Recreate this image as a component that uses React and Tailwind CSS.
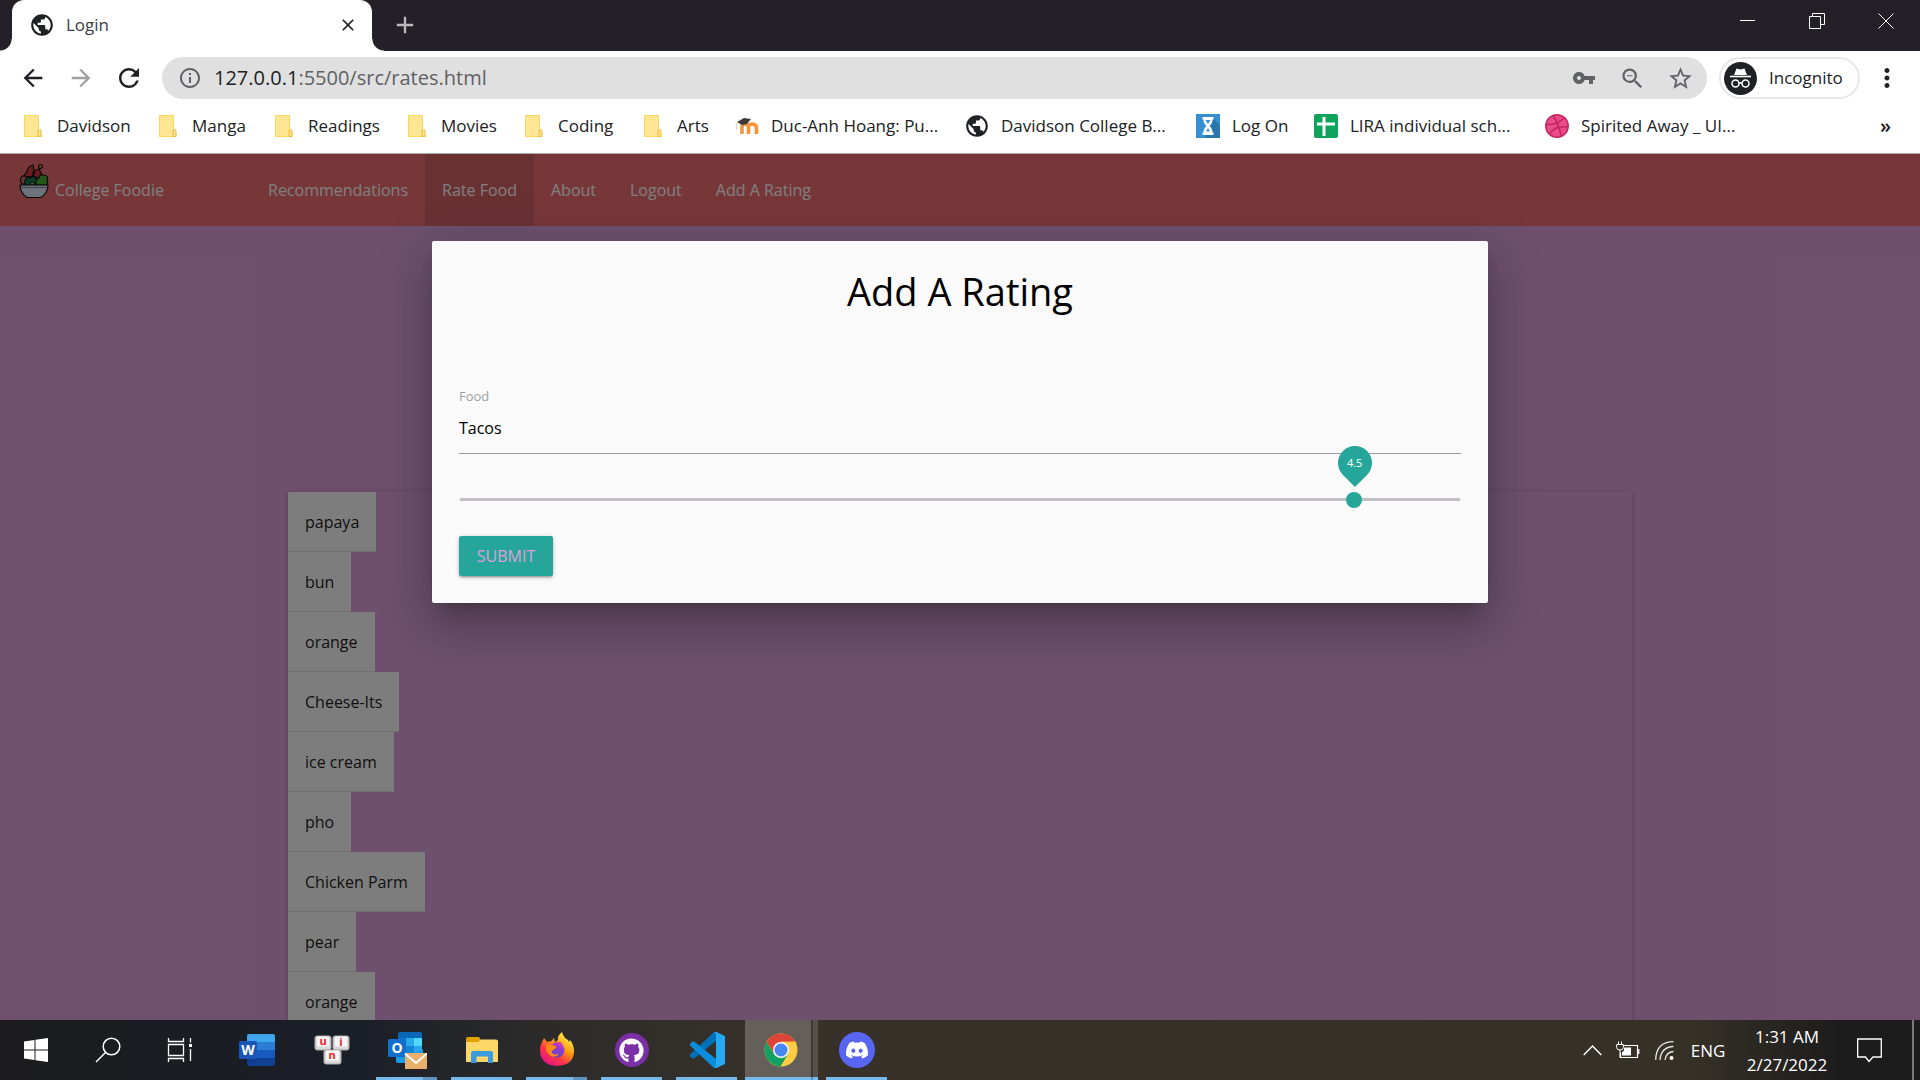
import React, {useState} from 'react'
import {
    MdArrowBack, MdArrowForward, MdRefresh, MdInfoOutline, MdPublic, MdVpnKey,
    MdZoomOut, MdStarBorder, MdMoreVert, MdClose, MdAdd
} from 'react-icons/md'
import {FaGithub, FaDiscord} from 'react-icons/fa'

const FolderIcon = () => (
    <svg width="24" height="24" viewBox="0 0 24 24">
        <path d="M3.5 1.5h14v17h2.5v4h-16.500z" fill="#ffe694" stroke="#fbd75b"/>
        <path d="M17 22.500v-5.500q0-1.500 1.500-1.500t1.500 1.500v5.500z" fill="#ffe28a" stroke="#e8bf45"/>
    </svg>
)

const MoodleIcon = () => (
    <svg width="24" height="24" viewBox="0 0 24 24">
        <path d="M7 20v-7q0-3 3-3t3.500 3v7M13.500 20v-7q0-3 3.500-3t4.500 3v7" fill="none" stroke="#f9943b" strokeWidth="3.600"/>
        <path d="M2 8l7-4 7 1-4 5-5 1z" fill="#3f3a38"/>
        <path d="M2.500 8q-2 4-1 8" fill="none" stroke="#f3c9a5" strokeWidth="1"/>
    </svg>
)

const HourglassIcon = () => (
    <svg width="24" height="24" viewBox="0 0 24 24">
        <rect width="24" height="24" fill="#3490d0"/>
        <path d="M17 4l7 7v13H9z" fill="#2a77ae"/>
        <path d="M6.500 3h11v2.500h-1q0 4-3 6.500 3 2.500 3 6.500h1V21h-11v-2.500h1q0-4 3-6.500-3-2.500-3-6.500h-1z" fill="#fff"/>
        <path d="M9.500 6h5l-2.500 4zM12 14l2 3.500h-4z" fill="#3490d0"/>
    </svg>
)

const SheetIcon = () => (
    <svg width="24" height="24" viewBox="0 0 24 24">
        <rect width="24" height="24" rx="2" fill="#10a35b"/>
        <path d="M3 10h18M10 3v19" stroke="#fff" strokeWidth="3"/>
    </svg>
)

const DribbbleIcon = () => (
    <svg width="24" height="24" viewBox="0 0 24 24" fill="none" stroke="#c2255f" strokeWidth="1.500">
        <circle cx="12" cy="12" r="11.200" fill="#ea4c89"/>
        <path d="M8 1.500q6 9 8 20.500M1 10.500q12 .5 18-6.500M4.500 20q5-9 18.500-7"/>
    </svg>
)

const GlobeIcon = () => <MdPublic size={26} className="-mx-px text-[#202124]"/>

const bookmarks = [
    {name: 'Davidson', icon: FolderIcon, width: 'w-[135px]'},
    {name: 'Manga', icon: FolderIcon, width: 'w-[116px]'},
    {name: 'Readings', icon: FolderIcon, width: 'w-[133px]'},
    {name: 'Movies', icon: FolderIcon, width: 'w-[117px]'},
    {name: 'Coding', icon: FolderIcon, width: 'w-[119px]'},
    {name: 'Arts', icon: FolderIcon, width: 'w-[94px]'},
    {name: 'Duc-Anh Hoang: Pu...', icon: MoodleIcon, width: 'w-[230px]'},
    {name: 'Davidson College B...', icon: GlobeIcon, width: 'w-[231px]'},
    {name: 'Log On', icon: HourglassIcon, width: 'w-[118px]'},
    {name: 'LIRA individual sch...', icon: SheetIcon, width: 'w-[231px]'},
    {name: 'Spirited Away _ UI...', icon: DribbbleIcon, width: 'w-[231px]'},
]

const IncognitoIcon = () => (
    <svg width="33" height="33" viewBox="0 0 33 33">
        <circle cx="16.500" cy="16.500" r="16.500" fill="#202124"/>
        <path d="M12.500 6.500l4 1 4-1 2.500 6.500H10z" fill="#fff"/>
        <path d="M6 14.500h21" stroke="#fff" strokeWidth="1.600"/>
        <g fill="none" stroke="#fff" strokeWidth="1.500">
            <circle cx="11.500" cy="21.500" r="3.500"/>
            <circle cx="21.500" cy="21.500" r="3.500"/>
            <path d="M15 21.500q1.500-1.500 3 0"/>
        </g>
    </svg>
)

const TabStrip = () => (
    <div className="flex h-[51px] bg-[#232127]">
        <span className="h-3 w-3 shrink-0 self-end bg-[radial-gradient(circle_at_0_0,#232127_11px,#fff_12px)]"/>
        <div className="flex w-[360px] items-center rounded-t-xl bg-white pb-0.5 pl-[17px] pr-[14px]">
            <MdPublic size={26} className="text-[#202124]"/>
            <span className="ml-[11px] flex-1 text-[17px] text-[#3c4043]">Login</span>
            <button aria-label="Close tab" className="text-[#202124]"><MdClose size={20}/></button>
        </div>
        <span className="h-3 w-3 shrink-0 self-end bg-[radial-gradient(circle_at_100%_0,#232127_11px,#fff_12px)]"/>
        <button aria-label="New tab" className="ml-1 flex w-[34px] items-center justify-center pb-0.5 text-[#bcbcbe]"><MdAdd size={28}/></button>
        <div className="ml-auto flex h-[42px] text-white">
            <button aria-label="Minimize" className="flex w-[69px] items-center justify-center">
                <svg width="15" height="15"><path d="M0 6.500h15" stroke="currentColor"/></svg>
            </button>
            <button aria-label="Restore" className="flex w-[69px] items-center justify-center">
                <svg width="16" height="16" fill="none" stroke="currentColor"><path d="M.5 3.500h11v12H.5zM3.500 3.500v-3h12v11h-4"/></svg>
            </button>
            <button aria-label="Close" className="flex w-[69px] items-center justify-center">
                <svg width="16" height="16" fill="none" stroke="currentColor"><path d="M.5.500l15 15M15.500.500l-15 15"/></svg>
            </button>
        </div>
    </div>
)

const Toolbar = () => (
    <div className="flex h-[54px] items-center bg-white pl-[9px] pr-[9px] text-[#202124]">
        <button aria-label="Back" className="flex w-12 justify-center"><MdArrowBack size={28}/></button>
        <button aria-label="Forward" className="flex w-12 justify-center text-[#a0a0a2]"><MdArrowForward size={28}/></button>
        <button aria-label="Reload" className="flex w-12 justify-center"><MdRefresh size={30}/></button>
        <div className="ml-[9px] flex h-[42px] flex-1 items-center rounded-full bg-[#e0e0e0] pl-4 pr-[3px] text-[#606165]">
            <MdInfoOutline size={24}/>
            <p className="ml-3 flex-1 text-[20px]"><span className="text-[#202124]">127.0.0.1</span>:5500/src/rates.html</p>
            <button aria-label="Saved passwords" className="flex w-12 justify-center"><MdVpnKey size={24}/></button>
            <button aria-label="Zoom" className="flex w-12 justify-center"><MdZoomOut size={27}/></button>
            <button aria-label="Bookmark this page" className="flex w-12 justify-center"><MdStarBorder size={27}/></button>
        </div>
        <button className="ml-3 flex h-[42px] w-[141px] items-center gap-3 rounded-full border-2 border-[#e6e6e8] pl-[3px] text-[17px]">
            <IncognitoIcon/>
            Incognito
        </button>
        <button aria-label="Menu" className="ml-[3px] flex w-12 justify-center"><MdMoreVert size={30}/></button>
    </div>
)

const BookmarksBar = () => (
    <div className="flex h-[49px] items-center border-b border-[#a9aeac] bg-white pb-[6px] pl-[21px] pr-[29px] text-[17px] text-[#202124]">
        {bookmarks.map((b) => (
            <a key={b.name} href="#" className={`flex shrink-0 items-center gap-3 whitespace-nowrap ${b.width}`}>
                <b.icon/>
                {b.name}
            </a>
        ))}
        <button aria-label="More bookmarks" className="ml-auto text-[20px] leading-6 font-semibold">»</button>
    </div>
)

const BowlLogo = () => (
    <svg width="30" height="36" viewBox="0 0 30 36" stroke="#111" strokeWidth="1.200">
        <path d="M2.500 21q-3.500-7 3.500-9 5-1 5 9z" fill="#b5705a"/>
        <path d="M5 13q1-3 3-4 0-5 6-7l1 5-2 7z" fill="#d8343c"/>
        <path d="M15 13q-1-6 5-7l3 6-3 4z" fill="#d8343c"/>
        <circle cx="21.500" cy="3.500" r="2" fill="#d98c2c"/>
        <path d="M6 22q-1-6 3-8 3 2 5-1 5 2 3 9z" fill="#0d7a5c"/>
        <path d="M17 22q-1-6 3-7 0-4 5-3 5 1 3 5 2 3-1 5z" fill="#4caf32"/>
        <path d="M10 22q3-5 7 0z" fill="#e8d5a0"/>
        <path d="M1 22h28q0 8-7 12.500H8Q1 30 1 22z" fill="#dbe6f5"/>
        <path d="M2 24.500h26" stroke="#8793a6"/>
    </svg>
)

const navLinks = ['Recommendations', 'Rate Food', 'About', 'Logout', 'Add A Rating']

const NavBar = () => (
    <nav className="flex h-[72px] bg-[#ee6e73] text-base leading-[72px] text-white">
        <a href="#" className="flex w-[251px] pl-[19px]">
            <span className="pt-[9px]"><BowlLogo/></span>
            <span className="ml-[6px]">College Foodie</span>
        </a>
        <ul className="flex">
            {navLinks.map((link) => (
                <li key={link} className={link === 'Rate Food' ? 'bg-black/10' : ''}>
                    <a href="#" className="block px-[17px]">{link}</a>
                </li>
            ))}
        </ul>
    </nav>
)

const foods = ['papaya', 'bun', 'orange', 'Cheese-Its', 'ice cream', 'pho', 'Chicken Parm', 'pear', 'orange']

const FoodList = () => (
    <ul className="mx-auto mt-[266px] w-[70%] shadow-[0_2px_2px_0_rgba(0,0,0,0.14),0_3px_1px_-2px_rgba(0,0,0,0.12),0_1px_5px_0_rgba(0,0,0,0.2)]">
        {foods.map((food, index) => (
            <li key={index} className="flex h-[60px]">
                <a href="#" className="border-b border-[#e0e0e0] bg-[#fafafa] px-[17px] text-base leading-[60px] text-black/90">{food}</a>
            </li>
        ))}
    </ul>
)

const RatingModal = () => {
    const [food, setFood] = useState('Tacos')
    const [rating, setRating] = useState(4.5)

    return (
        <form
            onSubmit={(e) => e.preventDefault()}
            className="w-[55%] rounded-[2px] bg-[#fafafa] p-[27px] text-black shadow-[0_27px_43px_3px_rgba(0,0,0,0.14),0_10px_52px_9px_rgba(0,0,0,0.12),0_12px_17px_-8px_rgba(0,0,0,0.2)]"
        >
            <h4 className="text-center text-[38px] leading-[46px]">Add A Rating</h4>

            <label htmlFor="food" className="mt-[72px] block text-[13px] leading-5 text-[#9e9e9e]">Food</label>
            <input
                id="food"
                type="text"
                value={food}
                onChange={(e) => setFood(e.target.value)}
                className="block h-12 w-full border-b border-[#9e9e9e] pb-1 text-base outline-none"
            />

            <div className="relative mt-[37px] h-4">
                <input
                    type="range"
                    aria-label="Rating"
                    min="0"
                    max="5"
                    step="0.1"
                    value={rating}
                    onChange={(e) => setRating(Number(e.target.value))}
                    className="block h-4 w-full appearance-none bg-transparent px-px [&::-webkit-slider-runnable-track]:h-[3px] [&::-webkit-slider-runnable-track]:bg-[#c2c0c2] [&::-webkit-slider-thumb]:-mt-[6px] [&::-webkit-slider-thumb]:size-4 [&::-webkit-slider-thumb]:appearance-none [&::-webkit-slider-thumb]:rounded-full [&::-webkit-slider-thumb]:bg-[#26a69a]"
                />
                {/* value bubble above the thumb */}
                <span className="absolute -top-[45px] left-[calc(90%-23px)] flex size-[34px] rotate-45 items-center justify-center rounded-full rounded-br-none bg-[#26a69a]">
                    <span className="-rotate-45 text-[11px] font-medium text-white">{rating}</span>
                </span>
            </div>

            <button
                type="submit"
                className="mt-[29px] block h-10 w-[94px] rounded-[2px] bg-[#26a69a] text-base text-[#dda0dd] shadow-[0_2px_2px_0_rgba(0,0,0,0.14),0_3px_1px_-2px_rgba(0,0,0,0.12),0_1px_5px_0_rgba(0,0,0,0.2)]"
            >
                SUBMIT
            </button>
        </form>
    )
}

const WindowsIcon = () => (
    <svg width="24" height="24" viewBox="0 0 24 24" fill="#fff">
        <path d="M0 3.500L10.500 2v9.500H0zM11.500 1.800L24 0v11.500H11.500zM0 12.500h10.500V22L0 20.500zM11.500 12.500H24V24l-12.500-1.800z"/>
    </svg>
)

const SearchIcon = () => (
    <svg width="26" height="26" viewBox="0 0 26 26" fill="none" stroke="#fff" strokeWidth="1.500">
        <circle cx="16.500" cy="9.500" r="8.300"/>
        <path d="M10.500 15.500L1 25"/>
    </svg>
)

const TaskViewIcon = () => (
    <svg width="26" height="26" viewBox="0 0 26 26" fill="none" stroke="#fff" strokeWidth="1.300">
        <path d="M1.500 1v3.500h15V1M1.500 25v-3.500h15V25M1.500 7.500h15v11h-15zM23.500 1v4.500M23.500 12v12"/>
        <path d="M22 7h3v3h-3z" fill="#fff" stroke="none"/>
    </svg>
)

const WordIcon = () => (
    <svg width="36" height="36" viewBox="0 0 36 36">
        <path d="M8 10V4q0-2 2-2h24q2 0 2 2v6z" fill="#41a5ee"/>
        <path d="M8 10h28v8H8z" fill="#2b7cd3"/>
        <path d="M8 18h28v8H8z" fill="#185abd"/>
        <path d="M8 26h28v6q0 2-2 2H10q-2 0-2-2z" fill="#103f91"/>
        <rect y="9" width="18" height="18" rx="1.500" fill="#1a56b8"/>
        <text x="9" y="23" textAnchor="middle" fontSize="14" fontWeight="700" fill="#fff">W</text>
    </svg>
)

const UnikeyIcon = () => (
    <svg width="36" height="36" viewBox="0 0 36 36" fontSize="11" fontWeight="700" textAnchor="middle">
        <g fill="#d9d9d9" stroke="#a9a9a9">
            <rect x="1" y="4" width="16" height="14" rx="2"/>
            <rect x="19" y="4" width="16" height="14" rx="2"/>
            <rect x="10" y="18" width="17" height="14" rx="2"/>
        </g>
        <g fill="#f6f6f6">
            <rect x="3" y="4.500" width="12" height="10" rx="1"/>
            <rect x="21" y="4.500" width="12" height="10" rx="1"/>
            <rect x="12" y="18.500" width="13" height="10" rx="1"/>
        </g>
        <g fill="#f0222b">
            <text x="9" y="13">u</text>
            <text x="27" y="14">i</text>
            <text x="18" y="27">n</text>
        </g>
    </svg>
)

const OutlookIcon = () => (
    <svg width="40" height="40" viewBox="0 0 40 40">
        <path d="M11 4q0-2 2-2h20q2 0 2 2v14H11z" fill="#0a67b5"/>
        <path d="M11 8h8v8h-8z" fill="#0f75cb"/>
        <path d="M19 8h8v8h-8z" fill="#28a8ea"/>
        <path d="M27 8h8v8h-8z" fill="#50d9ff"/>
        <path d="M19 16h8v8h-8z" fill="#1484d6"/>
        <path d="M27 16h8v7h-8z" fill="#28a8ea"/>
        <path d="M9 20l13 6 14-7v14H11q-2 0-2-2z" fill="#1a9be8"/>
        <rect x="1" y="9" width="18" height="18" rx="1.500" fill="#0f6fc9"/>
        <text x="10" y="23" textAnchor="middle" fontSize="14" fontWeight="700" fill="#fff">O</text>
        <path d="M18 23h22v16H18z" fill="#e8b06c"/>
        <path d="M18 23.500l11 9.500 11-9.500" fill="none" stroke="#fff" strokeWidth="1.800"/>
    </svg>
)

const ExplorerIcon = () => (
    <svg width="34" height="34" viewBox="0 0 34 34">
        <path d="M1 6q0-2 2-2h11l2 3v3H1z" fill="#e2a100"/>
        <path d="M1 9h12l3-2.500h15q2 0 2 2V29H1z" fill="#ffd668"/>
        <path d="M6 20q0-2 2-2h18q2 0 2 2v10h-5v-6.500H11.500V30H6z" fill="#3b9bdf"/>
    </svg>
)

const FirefoxIcon = () => (
    <svg width="36" height="36" viewBox="0 0 36 36">
        <defs>
            <linearGradient id="fox" x1="0.85" y1="0.1" x2="0.25" y2="0.95">
                <stop offset="0" stopColor="#fff44f"/>
                <stop offset=".4" stopColor="#ff980e"/>
                <stop offset=".7" stopColor="#ff3647"/>
                <stop offset="1" stopColor="#e31587"/>
            </linearGradient>
            <linearGradient id="foxGlobe" x1="0.7" y1="0" x2="0.4" y2="1">
                <stop offset="0" stopColor="#b833e1"/>
                <stop offset="1" stopColor="#5b45c4"/>
            </linearGradient>
        </defs>
        <path d="M3 10l2-4 3 4q2-1 4-.500L15 6l1 4 3-2q-1-4 4-8 1 5 6 8l1 2 1-2q4 5 4 11 0 14-17 15Q1 33 1 18q0-5 2-8z" fill="url(#fox)"/>
        <circle cx="18" cy="18" r="7.500" fill="url(#foxGlobe)"/>
        <path d="M7 12l6 1 4 1q1 2-3 4-2 1-1 3 3 3 7 0-2 5-8 3-6-3-5-12z" fill="#ff8a16"/>
        <path d="M16 10q5-1 8 2l-4 .500q3 2 4 5-5-5-8-7.500z" fill="#e0389b"/>
    </svg>
)

const GithubIcon = () => (
    <span className="flex size-[34px] items-center justify-center rounded-full bg-[#7b2fa6]">
        <FaGithub size={25} className="text-white"/>
    </span>
)

const VscodeIcon = () => (
    <svg width="36" height="36" viewBox="0 0 36 36">
        <path d="M27 9L4.500 27 1 24.500v-2L25 0l2 1z" fill="#0070b8"/>
        <path d="M27 27L4.500 9 1 11.500v2L25 36l2-1z" fill="#0a8ddd"/>
        <path d="M25 0l2-.200L36 4v28l-9 4.200L25 36l2-2V2z" fill="#25a9f2"/>
    </svg>
)

const ChromeIcon = () => (
    <svg width="34" height="34" viewBox="0 0 34 34">
        <circle cx="17" cy="17" r="16.500" fill="#fc4"/>
        <path d="M2.700 8.700A16.500 16.500 0 0 1 31.300 8.700L17 8.750 10 21z" fill="#db4437"/>
        <path d="M17 8.750h14.300A16.500 16.500 0 0 1 32.500 11H17z" fill="#fc4"/>
        <path d="M2.700 8.700A16.500 16.500 0 0 0 16.500 33.500L24.100 21.100 17 25.250 9.900 21.100z" fill="#12a15f"/>
        <circle cx="17" cy="17" r="8" fill="#f4f4f4"/>
        <circle cx="17" cy="17" r="6.500" fill="#4688f1"/>
    </svg>
)

const DiscordIcon = () => (
    <span className="flex size-9 items-center justify-center rounded-full bg-[#5865f2]">
        <FaDiscord size={24} className="text-white"/>
    </span>
)

const apps = [
    {name: 'Word', icon: WordIcon, windows: 0},
    {name: 'UniKey', icon: UnikeyIcon, windows: 0},
    {name: 'Outlook', icon: OutlookIcon, windows: 2},
    {name: 'File Explorer', icon: ExplorerIcon, windows: 1},
    {name: 'Firefox', icon: FirefoxIcon, windows: 2},
    {name: 'GitHub Desktop', icon: GithubIcon, windows: 1},
    {name: 'Visual Studio Code', icon: VscodeIcon, windows: 1},
    {name: 'Chrome', icon: ChromeIcon, windows: 2, active: true},
    {name: 'Discord', icon: DiscordIcon, windows: 1},
]

const AppButton = ({app}) => {
    if (app.active) {
        return (
            <button aria-label={app.name} className="flex w-[75px] px-px">
                <span className="flex h-full w-[66px] flex-col items-center border-b-[3px] border-[#76b9ed] bg-[#645f58] pl-[6px] pt-[13px]"><app.icon/></span>
                <span className="h-full w-[2px] border-b-[3px] border-[#5a8fb8] bg-[#3c3832]"/>
                <span className="h-full w-[5px] border-b-[3px] border-[#76b9ed] bg-[#54504a]"/>
            </button>
        )
    }
    return (
        <button aria-label={app.name} className="flex w-[75px] flex-col items-center">
            <span className="flex h-[57px] items-center pt-[3px]"><app.icon/></span>
            {app.windows > 0 && (
                <span className="flex h-[3px] w-[61px] bg-[#76b9ed]">
                    {app.windows > 1 && <span className="ml-auto w-[14px] bg-[#5f93bd]"/>}
                </span>
            )}
        </button>
    )
}

const Taskbar = () => (
    <footer className="flex h-[60px] shrink-0 bg-[linear-gradient(90deg,#1c1c1e_0%,#1a1e27_18%,#2c2b2a_28%,#37312a_40%,#363127_88%,#1c1c1d_96%)] text-white">
        <button aria-label="Start" className="flex w-[72px] items-center justify-center"><WindowsIcon/></button>
        <button aria-label="Search" className="flex w-[72px] items-center justify-center"><SearchIcon/></button>
        <button aria-label="Task view" className="flex w-[75px] items-center pl-[23px]"><TaskViewIcon/></button>
        {apps.map((app) => <AppButton key={app.name} app={app}/>)}

        <div className="ml-auto flex items-center text-[17px]">
            <button aria-label="Show hidden icons" className="flex w-9 justify-center">
                <svg width="19" height="11" fill="none" stroke="#fff" strokeWidth="1.400"><path d="M.7 10l8.800-9 8.800 9"/></svg>
            </button>
            <span className="flex w-9 justify-center">
                <svg width="24" height="18" viewBox="0 0 24 18" fill="none" stroke="#fff">
                    <path d="M7 4.500h14.500v12H4.500v-5M22.800 8v5" strokeWidth="1.200"/>
                    <path d="M8 6.500h7v8H6v-3l2-2z" fill="#fff" stroke="none"/>
                    <path d="M.700 3.500h6.600v3q0 2.500-3.300 2.500T.700 6.500zM2.500 3.500V.500M5.500 3.500V.500M4 9v7.500"/>
                </svg>
            </span>
            <span className="flex w-9 justify-center">
                <svg width="19" height="19" viewBox="0 0 19 19" fill="none" stroke="#e4e4e2" strokeWidth="1.300">
                    <path d="M.700 19Q1 1 18.500.700M5 19q1-13 13.500-13.500M10 19q1-8 8.500-8.500"/>
                    <circle cx="16.500" cy="17" r="2" fill="#fff" stroke="none"/>
                </svg>
            </span>
            <span className="w-[52px] pt-0.5 text-center">ENG</span>
            <div className="w-[106px] pt-0.5 text-center leading-7">
                <p>1:31 AM</p>
                <p>2/27/2022</p>
            </div>
            <button aria-label="Notifications" className="flex w-[58px] justify-center">
                <svg width="25" height="25" viewBox="0 0 25 25" fill="none" stroke="#fff" strokeWidth="1.300"><path d="M.700 1h23.600v18H16l-4 4.500L8.500 19H.700z"/></svg>
            </button>
            <span className="ml-[14px] mr-[6px] h-[60px] w-[2px] bg-[#7a7a7a]"/>
        </div>
    </footer>
)

const App = () => (
    <div className="flex h-screen flex-col overflow-hidden font-['Open_Sans','Noto_Sans',sans-serif]">
        <header className="shrink-0">
            <TabStrip/>
            <Toolbar/>
            <BookmarksBar/>
        </header>

        <main className="relative min-h-0 flex-1 overflow-hidden bg-[#dda0dd]">
            <NavBar/>
            <FoodList/>

            {/* dimmed backdrop and dialog */}
            <div className="absolute inset-0 bg-black/50"/>
            <div role="dialog" aria-label="Add A Rating" className="absolute inset-0 flex items-start justify-center pt-[87px]">
                <RatingModal/>
            </div>
        </main>

        <Taskbar/>
    </div>
)

export default App
